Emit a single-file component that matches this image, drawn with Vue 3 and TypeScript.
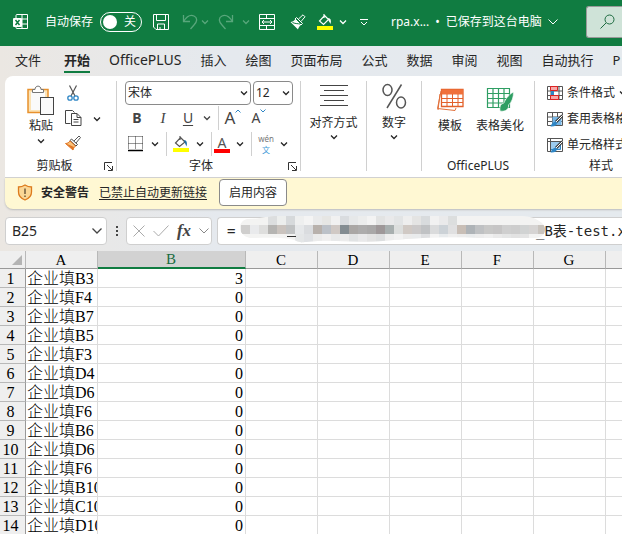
<script setup lang="ts">
import { ref, h, type FunctionalComponent } from 'vue'

const autoSave = ref(false)
const fontName = ref('宋体')
const fontSize = ref('12')
const cellName = ref('B25')
const formula = ref('=\u3000' + '\u00a0'.repeat(34) + '_B表-test.x')

const tabs = ['文件', '开始', 'OfficePLUS', '插入', '绘图', '页面布局', '公式', '数据', '审阅', '视图', '自动执行', 'P']
const columns = ['A', 'B', 'C', 'D', 'E', 'F', 'G', '']
const rows = [
  ['B3', 3], ['F4', 0], ['B7', 0], ['B5', 0], ['F3', 0], ['D4', 0], ['D6', 0],
  ['F6', 0], ['B6', 0], ['D6', 0], ['F6', 0], ['B10', 0], ['C10', 0], ['D10', 0],
].map(([code, value]) => ({ name: `企业填${code}`, value }))

const Chevron: FunctionalComponent = () =>
  h('svg', { class: 'chevron', viewBox: '0 0 8 8', width: 8, height: 8 }, [
    h('path', { d: 'M1 2.5 4 5.5 7 2.5', fill: 'none', stroke: 'currentColor', 'stroke-width': 1.3 }),
  ])
const Launcher: FunctionalComponent = () =>
  h('svg', { viewBox: '0 0 9 9', width: 9, height: 9 }, [
    h('path', { d: 'M.5 8V.5H8M3 3l5 5M8.5 4v4.5H4', fill: 'none', stroke: '#333' }),
  ])

const redacted = [
  { y: 0, start: 3, colors: ['#dcdedf', '#eceeed', '#d6d9db', '#eeefef', '#f4f4f4', '#e9eaeb', '#e6e6e4', '#f1f1f1', '#d9dcdf', '#e6e8e9', '#eceded', '#f3f3f3', '#e2e3e3', '#e9e9ea', '#e2e4e5', '#eeeeee', '#e4e4e3', '#d8dbdd', '#f1f1f1', '#eaeaeb', '#dcdede'] },
  { y: 9, start: 0, colors: ['#cfcecd', '#e9eaec', '#dededd', '#b5b4b2', '#cac3be', '#c0c2c3', '#e6e8ea', '#dadcdf', '#b8b1ac', '#bcc1c8', '#d0c9c5', '#848d92', '#aaa7a5', '#adacac', '#a9a8a8', '#9e9899', '#a8afaf', '#dcdedd', '#d0c9c4', '#cbc9c9', '#c0c2c4', '#dadbdc', '#ccd2d7', '#e0e0e1', '#c8beb6', '#aeb3b7', '#bfc1c3', '#c8c8c7', '#c6c5c5', '#cfcfcf', '#cdcdcd', '#d1d3d3', '#d6d4d3', '#c9c4be'] },
  { y: 18, start: 6, colors: ['#e4e6e7', '#dfe1e4', '#ebebeb', '#f0efef', '#e8e9ea', '#ececec', '#e1e3e4', '#e9e9ea', '#e3e3e3', '#dddfe0', '#eeeeee', '#f2f2f2', '#ebebeb', '#e9ebec', '#dedfe1', '#f3f3f3', '#e8ebed', '#efefef', '#ececec', '#e9ebec', '#ededed', '#f0f0f0', '#eaeaea', '#e5e6e6', '#e2e2e2', '#e4e4e4'] },
]
</script>

<template>
  <div class="window">
    <header class="titlebar">
      <svg class="logo" viewBox="0 0 16 18" width="16" height="18">
        <path d="M3 5V2.500Q3 1.500 4 1.500H14.500V15.500H4Q3 15.500 3 14.500V13M9 1.500V15.500M9 6H14.500M3 11H14.500" fill="none" stroke="#fff" />
        <rect y="5" width="9" height="9" rx="1" fill="#fff" />
        <path d="M2.500 7 6.500 12M6.500 7 2.500 12" stroke="#107c41" stroke-width="1.500" />
      </svg>
      <label class="autosave">
        <span>自动保存</span>
        <input v-model="autoSave" type="checkbox" role="switch" />
        <span class="track"><i></i><b>关</b></span>
      </label>
      <button aria-label="保存">
        <svg viewBox="0 0 16 16" width="16" height="16"><path d="M.5.5h15v15H3L.5 13zM3.500.5V6.500h9V.5M4.500 15.500V10h7v5.500M7 15.500V13" fill="none" stroke="#fff" /></svg>
      </button>
      <button class="dim" aria-label="撤消">
        <svg viewBox="0 0 16 18" width="16" height="18"><path d="M1.500 2V8.500H8M1.500 8.500C5 3 9 1.500 12 3c4 2 3 6 0 9L8.500 16" fill="none" stroke="currentColor" stroke-width="1.300" /></svg>
      </button>
      <button class="dim" aria-label="撤消选项"><Chevron /></button>
      <button class="dim" aria-label="恢复">
        <svg viewBox="0 0 16 18" width="16" height="18"><path d="M14.500 2V8.500H8M14.500 8.500C11 3 7 1.500 4 3c-4 2-3 6 0 9L7.500 16" fill="none" stroke="currentColor" stroke-width="1.300" /></svg>
      </button>
      <button class="dim" aria-label="恢复选项"><Chevron /></button>
      <button aria-label="合并后居中">
        <svg viewBox="0 0 16 16" width="16" height="16"><path d="M.5.5h15v15H.5zM.5 4.500h15M.5 11.500h15M7.500.5v4M7.500 11.500v4M3 8h10M5 6 3 8 5 10M11 6 13 8 11 10" fill="none" stroke="#fff" /></svg>
      </button>
      <button aria-label="格式刷">
        <svg viewBox="0 0 16 16" width="16" height="16"><path d="M8.500 5 13 .8 15 2.800 11 7.500" stroke="#fff" fill="none" /><path d="M6.500 3.500 12.500 9.500 11 11 5 5z" fill="#107c41" stroke="#fff" /><path d="M5 5.500C4 7 2.500 8 .5 8L8 15.500C8.500 13.500 9.500 12 11 11z" fill="#fff" /><path d="M2.500 8.500C6 10 8 9.500 10 10" stroke="#107c41" fill="none" /></svg>
      </button>
      <button aria-label="填充颜色">
        <svg viewBox="0 0 16 16" width="16" height="16"><path d="M7 0V4M7.500 1.500 11.500 5.500 6.500 10.500 2.500 7z" fill="none" stroke="#fff" stroke-width="1.200" /><path d="M11 4Q15 4 13.500 10L11.500 6.500z" fill="#fff" /><rect y="12" width="16" height="4" fill="#ff0" /></svg>
      </button>
      <button aria-label="填充选项"><Chevron /></button>
      <button aria-label="自定义快速访问工具栏">
        <svg viewBox="0 0 8 8" width="8" height="8"><path d="M0 1.500H8M1 4 4 7 7 4" fill="none" stroke="#fff" /></svg>
      </button>
      <button class="document"><span>rpa.x...</span><span>•</span><span>已保存到这台电脑</span>
        <svg viewBox="0 0 10 6" width="10" height="6"><path d="M.5.5 5 5 9.500.5" fill="none" stroke="#fff" /></svg>
      </button>
      <button class="search" aria-label="搜索">
        <svg viewBox="0 0 15 15" width="15" height="15"><circle cx="9.500" cy="5.500" r="4.500" fill="none" stroke="#1d6b40" /><path d="M6 9 .5 14.500" stroke="#1d6b40" /></svg>
      </button>
    </header>

    <nav class="tabs">
      <button v-for="tab in tabs" :key="tab" :class="{ active: tab === '开始', latin: tab === 'OfficePLUS' }">{{ tab }}</button>
    </nav>

    <main>
      <section class="ribbon">
        <div class="group clipboard">
          <div class="body">
            <button class="large">
              <svg viewBox="0 0 28 31" width="28" height="31">
                <rect x="1" y="4.500" width="20" height="23" fill="#fbe3b6" stroke="#e8912d" stroke-width="1.500" />
                <rect x="4" y="7" width="14" height="18" fill="#fafafa" />
                <path d="M5.500 7.500V4.500H8C8 0 14 0 14 4.500h2.500v3z" fill="#fff" stroke="#777" />
                <rect x="13.500" y="12.500" width="13" height="17" fill="#fafafa" stroke="#444" />
              </svg>
              <span>粘贴</span><Chevron />
            </button>
            <div class="stack">
              <button aria-label="剪切">
                <svg viewBox="0 0 16 17" width="16" height="17"><path d="M4.500.5 10 11M11.500.5 6 11" stroke="#555" fill="none" stroke-width="1.200" /><circle cx="5" cy="13" r="2.200" fill="none" stroke="#2f86c5" stroke-width="1.300" /><circle cx="11" cy="13" r="2.200" fill="none" stroke="#2f86c5" stroke-width="1.300" /></svg>
              </button>
              <button class="copy" aria-label="复制">
                <svg viewBox="0 0 17 17" width="17" height="17"><path d="M5.500 13.500H.5V.5H7.500L9.500 2.500" fill="none" stroke="#444" /><path d="M6.500 3.500H12L16 7.500V15.500H6.500zM12 3.500V7.500H16M8.500 9.500h5M8.500 12h5" fill="#fff" stroke="#444" /></svg>
                <Chevron />
              </button>
              <button aria-label="格式刷">
                <svg viewBox="0 0 16 16" width="16" height="16"><path d="M9 6 14 1l1.500 1.500L11 8" stroke="#555" fill="#fff" /><path d="M6.500 4 12.500 9.500 11 11 5 5.500z" fill="#fff" stroke="#444" /><path d="M5 6C4 7.500 2.500 8.500.5 8.500L8 15C8.500 13 9.500 12 10.500 11z" fill="#fbc27a" stroke="#e07424" /><path d="M1 8.500 8 15 9 12z" fill="#e07424" /></svg>
              </button>
            </div>
          </div>
          <footer><span>剪贴板</span><button aria-label="剪贴板设置"><Launcher /></button></footer>
        </div>

        <div class="group font">
          <div class="body">
            <div class="selects">
              <label class="picker"><select v-model="fontName" aria-label="字体"><option>宋体</option></select><Chevron /></label>
              <label class="picker small"><select v-model="fontSize" aria-label="字号"><option>12</option></select><Chevron /></label>
            </div>
            <div class="tools letters">
              <button class="bold">B</button>
              <button class="italic">I</button>
              <button class="under">U</button>
              <button aria-label="下划线选项"><Chevron /></button>
              <hr />
              <button class="grow" aria-label="增大字号">A<svg viewBox="0 0 6 4" width="6" height="4"><path d="M.5 3.500 3 1 5.500 3.500" fill="none" stroke="#2f86c5" /></svg></button>
              <button class="shrink" aria-label="减小字号">A<svg viewBox="0 0 6 4" width="6" height="4"><path d="M.5.5 3 3 5.500.5" fill="none" stroke="#2f86c5" /></svg></button>
            </div>
            <div class="tools fills">
              <button aria-label="边框"><svg viewBox="0 0 16 16" width="16" height="16"><path d="M.5.5H15M.5 7.500H15M.5.5V13M7.500.5V13M14.500.5V13" stroke="#333" stroke-dasharray="1 1" /><path d="M0 14.500H15" stroke="#000" stroke-width="1.500" /></svg></button>
              <button aria-label="边框选项"><Chevron /></button>
              <hr />
              <button aria-label="填充颜色"><svg viewBox="0 0 16 16" width="16" height="16"><path d="M7 0V4M7.500 1.500 12 6 6.500 10.500 2.500 7z" fill="none" stroke="#555" stroke-width="1.200" /><path d="M11 4Q15 4 13.500 10.500L11.500 6z" fill="#1e6fa8" /><rect y="12" width="16" height="4" fill="#ff0" /></svg></button>
              <button aria-label="填充选项"><Chevron /></button>
              <hr />
              <button class="fontcolor" aria-label="字体颜色"><span>A</span></button>
              <button aria-label="字体颜色选项"><Chevron /></button>
              <hr />
              <button class="pinyin"><span>wén</span><span>文</span></button>
              <button aria-label="拼音选项"><Chevron /></button>
            </div>
          </div>
          <footer><span>字体</span><button aria-label="字体设置"><Launcher /></button></footer>
        </div>

        <div class="group align">
          <button class="large">
            <svg viewBox="0 0 28 31" width="28" height="31"><path d="M0 2.500H28M4 7.500H24M0 12.500H28M4 17.500H24M0 22.500H28" stroke="#444" /></svg>
            <span>对齐方式</span><Chevron />
          </button>
        </div>
        <div class="group number">
          <button class="large">
            <svg viewBox="0 0 28 31" width="28" height="31"><ellipse cx="7.500" cy="7" rx="4.500" ry="5.500" fill="none" stroke="#555" stroke-width="1.500" /><ellipse cx="21" cy="19.500" rx="4.500" ry="5.500" fill="none" stroke="#555" stroke-width="1.500" /><path d="M21.500 1.500 7 25" stroke="#555" stroke-width="1.500" /></svg>
            <span>数字</span><Chevron />
          </button>
        </div>

        <div class="group plus">
          <div class="body">
            <button class="large">
              <svg viewBox="0 0 28 31" width="28" height="31"><path d="M5 7 1.500 24.500 19 26.500 20 24M4 10 2 26" fill="none" stroke="#e2703a" /><path d="M5.500 5.500H27V22.500H5.500z" fill="#fff" stroke="#e2602a" stroke-width="1.300" /><path d="M5.500 5.500H27V10.500H5.500z" fill="#f0703a" /><path d="M5.500 14.500H27M5.500 18.500H27M11 10V22.500M16.500 10V22.500M22 10V22.500" stroke="#e2602a" /></svg>
              <span>模板</span>
            </button>
            <button class="large">
              <svg viewBox="0 0 28 31" width="28" height="31"><path d="M1.500 4.500H23.500V23.500H1.500zM1.500 9.500H23.500M1.500 14.500H23.500M1.500 19H23.500M7 4.500V23.500M12.500 4.500V23.500M18 4.500V23.500" fill="#fff" stroke="#2f9e63" stroke-width="1.200" /><path d="M27.500 8C22 11 19 16 18 19Q13 20 14 27C20 28 23 25 22.500 21 26 18 27.500 13 27.500 8z" fill="#2f9e63" stroke="#fff" stroke-width=".6" /></svg>
              <span>表格美化</span>
            </button>
          </div>
          <footer><span>OfficePLUS</span></footer>
        </div>

        <div class="group styles">
          <div class="body list">
            <button>
              <svg viewBox="0 0 16 15" width="16" height="15"><path d="M.5.5h15v13H.5zM.5 5h15M.5 9.500h15M4 .5v13M12 .5v13" fill="#fff" stroke="#555" /><path d="M3.500.5h7v4h-7zM3.500 9.500h8v4h-8z" fill="#f7a8a8" stroke="#d22" /><path d="M4 5h3v4H4z" fill="#2f86c5" /></svg>
              <span>条件格式</span><Chevron />
            </button>
            <button>
              <svg viewBox="0 0 16 15" width="16" height="15"><path d="M.5.5h15v13H.5zM.5 5h15M.5 9.500h15M5.500.5v13M10.500.5v13" fill="#fff" stroke="#555" /><path d="M5.500 5h9v8h-9z" fill="#77b6e6" /><path d="M15.500 3.500 9 10" stroke="#444" stroke-width="3" /><path d="M15.500 3.500 9 10" stroke="#fff" /><path d="M9 9.500Q5 10 3.500 14.500 9.500 15 10 11z" fill="#2f86c5" /></svg>
              <span>套用表格格式</span>
            </button>
            <button>
              <svg viewBox="0 0 16 15" width="16" height="15"><path d="M.5.5h15v13H.5z" fill="#fff" stroke="#555" /><path d="M3.500 3.500h10v8h-10z" fill="#9ccbee" stroke="#2f86c5" /><path d="M.5 3.500h15M3.500.5v13" stroke="#555" /><path d="M15.500 3.500 9 10" stroke="#444" stroke-width="3" /><path d="M15.500 3.500 9 10" stroke="#fff" /><path d="M9 9.500Q5 10 3.500 14.500 9.500 15 10 11z" fill="#2f86c5" /></svg>
              <span>单元格样式</span>
            </button>
          </div>
          <footer><span>样式</span></footer>
        </div>
      </section>

      <section class="notice">
        <svg viewBox="0 0 16 17" width="16" height="17"><path d="M8 1Q11 3 14.500 3V8Q14.500 13.500 8 16 1.500 13.500 1.500 8V3Q5 3 8 1z" fill="#fbd795" stroke="#dd7a1c" stroke-width="1.300" /><path d="M8 4.500V10M8 11.500V13" stroke="#5b4a30" stroke-width="1.300" /></svg>
        <strong>安全警告</strong>
        <a href="#">已禁止自动更新链接</a>
        <button>启用内容</button>
      </section>

      <section class="formula-bar">
        <div class="box name">
          <input v-model="cellName" aria-label="名称框" />
          <svg viewBox="0 0 10 6" width="10" height="6"><path d="M.5.5 5 5 9.500.5" fill="none" stroke="#444" stroke-width="1.300" /></svg>
        </div>
        <svg viewBox="0 0 3 12" width="3" height="12"><path d="M0 1h2v2H0zM0 5h2v2H0zM0 9h2v2H0z" fill="#444" /></svg>
        <div class="box actions">
          <button aria-label="取消"><svg viewBox="0 0 12 12" width="12" height="12"><path d="M.5.5 11.500 11.500M11.500.5.5 11.500" stroke="#aaa" /></svg></button>
          <button aria-label="输入"><svg viewBox="0 0 16 12" width="16" height="12"><path d="M.5 6 5.500 11 15.500.5" fill="none" stroke="#aaa" /></svg></button>
          <button class="fx">fx</button>
          <button aria-label="函数选项"><svg viewBox="0 0 10 6" width="10" height="6"><path d="M.5.5 5 5 9.500.5" fill="none" stroke="#888" /></svg></button>
        </div>
        <div class="box formula">
          <input v-model="formula" aria-label="编辑栏" />
          <svg class="redaction" viewBox="0 0 310 28" width="310" height="28">
            <defs><clipPath id="smear"><path d="M10 3 C22 3 28 0 40 0H285C298 1 307 7 307 13S303 22 297 22L240 22C200 20 170 23 145 25S100 24 80 25 66 28 56 24C46 21 30 22 12 22-1 20-1 4 10 3z" /></clipPath></defs>
            <g clip-path="url(#smear)">
              <rect width="310" height="28" fill="#f3f3f2" />
              <g v-for="band in redacted" :key="band.y">
                <rect v-for="(c, i) in band.colors" :key="i" :x="3 + (band.start + i) * 9" :y="band.y" width="9" height="9" :fill="c" />
              </g>
            </g>
            <path d="M49 20.500H58" stroke="#333" />
          </svg>
        </div>
      </section>
    </main>

    <div class="sheet">
      <table>
        <colgroup><col class="index" /><col class="a" /><col class="b" /><col v-for="n in 6" :key="n" class="a" /></colgroup>
        <thead>
          <tr>
            <th class="corner"><svg viewBox="0 0 10 10" width="10" height="10"><path d="M10 0V10H0z" fill="#b4b4b4" /></svg></th>
            <th v-for="c in columns" :key="c" scope="col" :class="{ selected: c === 'B' }">{{ c }}</th>
          </tr>
        </thead>
        <tbody>
          <tr v-for="(row, i) in rows" :key="i">
            <th scope="row">{{ i + 1 }}</th>
            <td>{{ row.name }}</td>
            <td class="value">{{ row.value }}</td>
            <td v-for="n in 6" :key="n"></td>
          </tr>
        </tbody>
      </table>
    </div>
  </div>
</template>

<style>
body { margin: 0; }
</style>

<style scoped>
* { box-sizing: border-box; }
.window {
  height: 100vh;
  display: flex;
  flex-direction: column;
  overflow: hidden;
  background: linear-gradient(90deg, #ebe7e2, #e5e9ee 35%, #e5eaee);
  color: #262626;
  font: 12px/16px "Noto Sans", "Noto Sans CJK SC", sans-serif;
  white-space: nowrap;
}
svg { display: block; flex: none; }
button { display: flex; align-items: center; justify-content: center; border: 0; padding: 0; background: none; color: inherit; font: inherit; white-space: nowrap; }
input, select { font: inherit; color: inherit; border: 0; outline: 0; background: none; padding: 0; margin: 0; min-width: 0; }

.titlebar {
  flex: none;
  height: 46px;
  padding: 0 0 3px 13px;
  display: grid;
  grid-template-columns: 32px 97px 37px 22px 8px 34px 6px 36px 26px 28px 8px 34px 203px 1fr;
  align-items: center;
  background: #107c41;
  color: #fff;
}
.autosave { display: flex; align-items: center; gap: 7px; }
.autosave input { position: absolute; opacity: 0; }
.track { display: flex; align-items: center; justify-content: space-between; width: 42px; height: 20px; border: 1px solid #fff; border-radius: 10px; padding: 0 5px 0 2px; }
.track i { width: 14px; height: 14px; border-radius: 50%; background: #fff; }
.track b { font-weight: 400; }
.dim { color: #58a67b; }
.document { gap: 6px; justify-content: flex-start; padding-left: 10px; }
.search { height: 32px; justify-content: flex-start; padding-left: 13px; border: 1px solid #9a9a9a; border-right: 0; border-radius: 3px 0 0 3px; background: #cfe3d8; margin-left: 2px; }

.tabs { flex: none; display: flex; gap: 19px; height: 30px; padding: 0 0 3px 15px; font-size: 13px; line-height: 20px; }
.tabs button:first-child { margin-right: 4px; }
.tabs .active { font-weight: 700; box-shadow: inset 0 -2px #107c41; }
.tabs .latin { font-size: 14px; }

main { flex: none; padding-left: 5px; }
.ribbon { display: flex; height: 102px; padding: 5px 0 6px; border-bottom: 1px solid #d2d2d2; border-radius: 8px 0 0; background: #fff; }
.group { flex: none; display: flex; flex-direction: column; justify-content: space-between; border-right: 1px solid #d0d0d0; }
.clipboard { width: 112px; }
.font { width: 184px; }
.align { width: 66px; }
.number { width: 55px; }
.plus { width: 113px; }
.styles { width: 136px; border: 0; }
.group footer { display: flex; justify-content: center; height: 13px; line-height: 16px; position: relative; }
.clipboard footer { padding-right: 12px; }
.font footer { padding-right: 15px; }
.group footer button { position: absolute; right: 3px; bottom: 0; }
.large { flex-direction: column; }
.clipboard .body { display: flex; padding: 4px 0 0 22px; gap: 10px; height: 77px; }
.clipboard .large { width: 28px; justify-content: flex-start; }
.clipboard .large span { margin: 2px 0 3px; }
.stack { display: flex; flex-direction: column; align-items: flex-start; gap: 8px; }
.copy { gap: 11px; }
.align .large, .number .large { padding-top: 2px; }
.align span, .number span { margin: 1px 0 2px; }
.plus .body { display: flex; justify-content: center; gap: 12px; padding: 3px 0 0 4px; }
.plus .large span { margin-top: 3px; }

.selects { display: flex; gap: 2px; padding-left: 8px; }
.picker { display: flex; align-items: center; width: 126px; height: 24px; border: 1px solid #8a8a8a; border-radius: 4px; padding: 0 2px; }
.picker.small { width: 40px; }
.picker select { flex: 1; appearance: none; height: 22px; }
.tools { display: grid; align-items: center; justify-items: center; height: 26px; }
.letters { grid-template-columns: 26px 26px 24px 14px 8px 22px 30px; padding-left: 7px; font-size: 14px; color: #444; }
.fills { grid-template-columns: 24px 14px 8px 22px 16px 6px 16px 20px 2px 28px 8px; padding-left: 7px; }
hr { width: 1px; height: 24px; border: 0; margin: 0; background: #d0d0d0; }
.bold { font-weight: 700; }
.italic { font-family: "Liberation Serif", serif; font-style: italic; font-size: 15px; }
.under { text-decoration: underline; text-underline-offset: 2px; }
.grow, .shrink { align-items: flex-start; line-height: 18px; }
.grow { font-size: 17px; }
.shrink { font-size: 14px; }
.fontcolor { width: 16px; height: 17px; align-items: flex-start; border-bottom: 4px solid #f00; color: #555; font-size: 14px; line-height: 13px; }
.pinyin { flex-direction: column; font-size: 8px; line-height: 11px; color: #777; }
.pinyin span + span { color: #3f9bd8; }

.list { display: flex; flex-direction: column; align-items: flex-start; gap: 10px; padding: 4px 0 0 12px; }
.list button { gap: 4px; }
.list + footer { padding-right: 4px; }

.notice { display: flex; align-items: center; height: 31px; padding: 0 17px 2px 12px; border-radius: 0 0 0 8px; background: #fff8d3; box-shadow: 0 1px 2px #bbb; }
.notice strong { margin: 0 10px 0 8px; }
.notice a { color: inherit; text-underline-offset: 2px; }
.notice button { width: 68px; height: 27px; margin-left: 12px; border: 1px solid #8a8a8a; border-radius: 4px; background: #fff; }

.formula-bar { display: flex; align-items: center; height: 42px; padding-top: 1px; gap: 5px; }
.box { display: flex; align-items: center; height: 28px; border: 1px solid #cfcfcf; border-radius: 4px; background: #fff; }
.name { width: 102px; padding: 0 4px 0 6px; margin-right: 4px; font-size: 14px; }
.name input { flex: 1; }
.actions { width: 86px; justify-content: space-between; padding: 0 2px 0 6px; margin-left: 2px; }
.fx { font: italic 700 17px/20px "Liberation Serif", serif; color: #444; }
.formula { flex: 1; min-width: 0; position: relative; border-right: 0; border-radius: 4px 0 0 4px; padding-left: 9px; font: 14px/20px "DejaVu Sans Mono", "Noto Sans CJK SC", monospace; }
.formula input { flex: 1; width: 100%; }
.redaction { position: absolute; left: 20px; top: -2px; }

.sheet { flex: 1; overflow: hidden; background: #fff; color: #000; font: 16px/17px "Liberation Serif", "Noto Sans CJK SC", serif; }
table { table-layout: fixed; width: 678px; border-spacing: 0; }
.index { width: 26px; }
.a { width: 72px; }
.b { width: 148px; }
th, td { height: 19px; padding: 1px 2px 0 1px; overflow: hidden; border-right: 1px solid #dcdcdc; border-bottom: 1px solid #dcdcdc; font-weight: 400; text-overflow: clip; }
td:nth-child(2) { font-weight: 300; padding-right: 0; }
th { background: #efefef; }
thead th { height: 18px; padding-bottom: 0; line-height: 16px; font-size: 15px; border-right-color: #b8b8b8; border-bottom-color: #999; }
tbody th { padding: 1px 4px 0 0; border-right-color: #999; border-bottom-color: #b8b8b8; }
thead .corner { padding: 1px 3px 0; }
.corner svg { margin-left: 9px; }
thead .selected { background: #d2d2d2; color: #186c3e; border-bottom: 2px solid #107c41; line-height: 15px; }
.value { text-align: right; }
</style>
